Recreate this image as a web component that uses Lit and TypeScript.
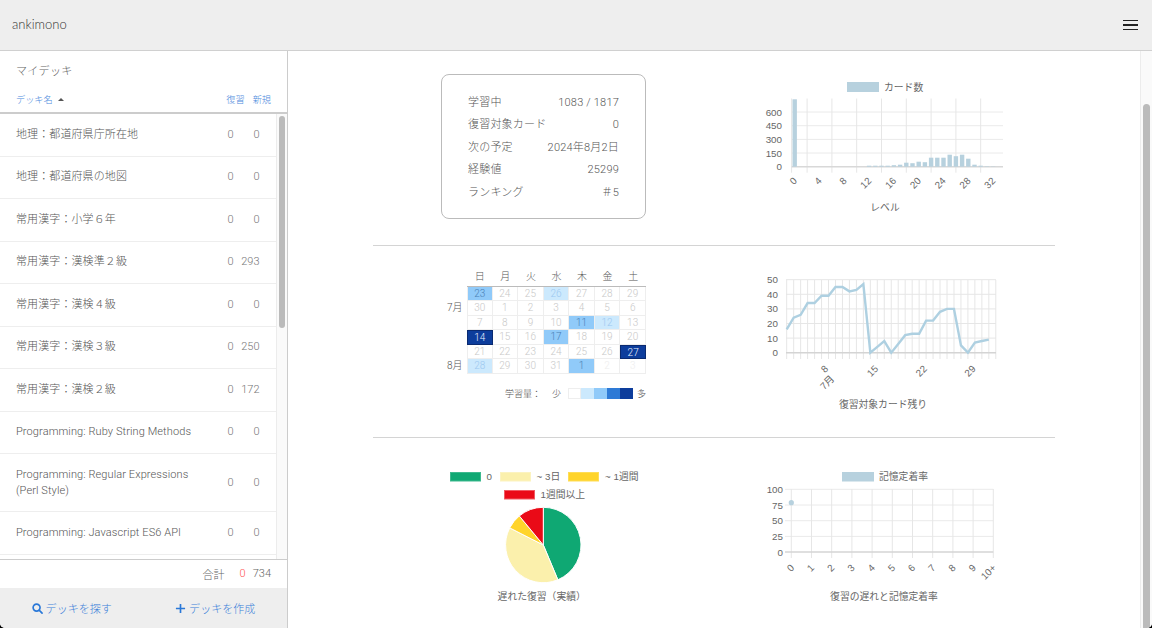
import { LitElement, html, css, svg } from "lit";
import { customElement } from "lit/decorators.js";

const BLUE = "#b7d1de";
const decks: [string, string, string][] = [
  ["地理：都道府県庁所在地", "0", "0"],
  ["地理：都道府県の地図", "0", "0"],
  ["常用漢字：小学６年", "0", "0"],
  ["常用漢字：漢検準２級", "0", "293"],
  ["常用漢字：漢検４級", "0", "0"],
  ["常用漢字：漢検３級", "0", "250"],
  ["常用漢字：漢検２級", "0", "172"],
  ["Programming: Ruby String Methods", "0", "0"],
  ["Programming: Regular Expressions (Perl Style)", "0", "0"],
  ["Programming: Javascript ES6 API", "0", "0"],
  ["", "", ""],
];
const stats = [
  ["学習中", "1083 / 1817"],
  ["復習対象カード", "0"],
  ["次の予定", "2024年8月2日"],
  ["経験値", "25299"],
  ["ランキング", "＃5"],
];
type Cell = [string, string];
const cal: Cell[] = [
  ["23", "l2"], ["24", ""], ["25", ""], ["26", "l1"], ["27", ""], ["28", ""], ["29", ""],
  ["30", ""], ["1", ""], ["2", ""], ["3", ""], ["4", ""], ["5", ""], ["6", ""],
  ["7", ""], ["8", ""], ["9", ""], ["10", ""], ["11", "l2"], ["12", "l1"], ["13", ""],
  ["14", "l4"], ["15", ""], ["16", ""], ["17", "l2"], ["18", ""], ["19", ""], ["20", ""],
  ["21", ""], ["22", ""], ["23", ""], ["24", ""], ["25", ""], ["26", ""], ["27", "l4"],
  ["28", "l1"], ["29", ""], ["30", ""], ["31", ""], ["1", "l2"], ["2", "fu"], ["3", "fu"],
];

const barPx: Record<number, number> = {
  0: 67.4, 12: 1, 13: 1, 14: 1, 15: 1, 16: 1.5, 17: 2, 18: 4, 19: 3.5, 20: 5, 21: 4.5, 22: 9, 23: 9, 24: 9,
  25: 12, 26: 10.5, 27: 12, 28: 8, 29: 2, 30: 1, 31: 0.4, 32: 0.3,
};
const lineData = [16, 24, 26, 34, 34, 39, 39, 45, 45, 42, 43, 47, 0, 4, 8, 0, 6, 12, 13, 13, 22, 22, 28, 30, 30, 5, 0, 7, 8, 9];

function range(n: number) {
  return Array.from({ length: n }, (_, i) => i);
}
function arc(cx: number, cy: number, r: number, a: number, b: number) {
  const p = (d: number) => {
    const t = (d * Math.PI) / 180;
    return `${(cx + r * Math.sin(t)).toFixed(2)} ${(cy - r * Math.cos(t)).toFixed(2)}`;
  };
  return `M${cx} ${cy}L${p(a)}A${r} ${r} 0 ${b - a > 180 ? 1 : 0} 1 ${p(b)}Z`;
}

@customElement("app-root")
export class AppRoot extends LitElement {
  static styles = css`
    :host {
      display: block;
      width: 1152px;
      height: 628px;
      overflow: hidden;
      background: #000;
      color: #555;
      font-family: Roboto, "Noto Sans CJK JP", sans-serif;
      font-size: 11px;
      font-weight: 300;
    }
    .shell {
      display: flex;
      flex-direction: column;
      height: 100%;
      overflow: hidden;
      background: #fff;
      border-radius: 0 0 5px 5px;
    }
    .top {
      flex: none;
      height: 50px;
      box-sizing: content-box;
      border-bottom: 1px solid #d0d0d0;
      background: #eeeeee;
      display: flex;
      align-items: center;
      justify-content: space-between;
      padding: 0 14px 0 12px;
    }
    .logo {
      font-family: Lato, sans-serif;
      font-weight: 300;
      font-size: 13px;
      color: #333;
      margin-top: -3px;
    }
    .burger {
      display: flex;
      flex-direction: column;
      gap: 3px;
      width: 15px;
    }
    .burger i {
      display: block;
      height: 1.5px;
      background: #222;
    }
    .body {
      flex: 1;
      display: flex;
      min-height: 0;
    }
    .side {
      flex: none;
      width: 287px;
      border-right: 1px solid #ccc;
      display: flex;
      flex-direction: column;
      min-height: 0;
    }
    .side-title {
      flex: none;
      padding: 13px 16px 0;
      height: 27px;
      box-sizing: border-box;
      line-height: 15px;
      font-size: 11px;
      color: #666;
      letter-spacing: 0.3px;
    }
    .side-head {
      flex: none;
      height: 36px;
      padding: 14px 16px 0;
      box-sizing: border-box;
      display: flex;
      border-bottom: 2px solid #ccc;
      color: #4a89dc;
      font-size: 9.2px;
      line-height: 15px;
    }
    .side-head .name {
      flex: 1;
    }
    .side-head .sort {
      display: inline-block;
      margin-left: 5px;
      vertical-align: 2px;
      border: 3px solid transparent;
      border-top: 0;
      border-bottom: 3.5px solid #555;
    }
    .side-head .h2 {
      margin-left: 8px;
    }
    .list-wrap {
      flex: 1;
      min-height: 0;
      display: flex;
      overflow: hidden;
    }
    .list {
      flex: 1;
      min-width: 0;
    }
    .row {
      display: flex;
      align-items: center;
      min-height: 42.5px;
      box-sizing: border-box;
      border-bottom: 1.5px solid #eee;
      padding: 12.5px 16px;
      line-height: 16px;
    }
    .row .t {
      flex: 1;
      min-width: 0;
      padding-right: 28px;
      letter-spacing: 0.1px;
    }
    .row .a {
      width: 12px;
      text-align: center;
      color: #777;
    }
    .row .b {
      width: 23px;
      text-align: right;
      color: #777;
    }
    .track {
      flex: none;
      width: 11.5px;
      box-sizing: border-box;
      background: #fafafa;
      border-left: 1px solid #ececec;
    }
    .thumb {
      width: 6.5px;
      margin: 2px 0 0 2px;
      height: 212px;
      background: #bbb;
      border-radius: 3px;
    }
    .total {
      flex: none;
      height: 29px;
      box-sizing: border-box;
      border-top: 1px solid #ccc;
      padding: 0 16px 1px 0;
      display: flex;
      justify-content: flex-end;
      align-items: center;
      color: #666;
    }
    .total .z {
      color: #f55;
      margin-left: 15px;
      margin-right: 7px;
    }
    .actions {
      flex: none;
      height: 40px;
      background: #eee;
      display: flex;
      color: #3b7fd9;
      font-size: 11px;
      letter-spacing: 0.05px;
    }
    .actions div {
      flex: 1;
      display: flex;
      align-items: center;
      justify-content: center;
      gap: 3px;
    }
    .actions svg {
      width: 11px;
      height: 11px;
    }
    .main {
      flex: 1;
      min-width: 0;
      display: flex;
    }
    .content {
      flex: 1;
      min-width: 0;
      padding: 0 85px;
    }
    .mtrack {
      flex: none;
      width: 12px;
      box-sizing: border-box;
      background: #fafafa;
      border-left: 1px solid #ececec;
    }
    .mthumb {
      width: 7px;
      margin: 53px 0 0 2px;
      height: 530px;
      background: #bbb;
      border-radius: 3.5px;
    }
    .sec {
      display: grid;
      grid-template-columns: 341px 341px;
      box-sizing: border-box;
      border-bottom: 1px solid #d4d4d4;
    }
    .s1 {
      height: 195px;
    }
    .s2 {
      height: 192px;
    }
    .s3 {
      border-bottom: 0;
    }
    .card {
      width: 205px;
      height: 145px;
      box-sizing: border-box;
      margin: 23px 0 0 68px;
      border: 1px solid #bbb;
      border-radius: 8px;
      padding: 17px 26px 0;
    }
    .card div {
      display: flex;
      justify-content: space-between;
      height: 22.4px;
      line-height: 22.4px;
      letter-spacing: 0.2px;
    }
    .cal {
      margin: 24px 0 0 74px;
      width: 199px;
    }
    .calgrid {
      display: grid;
      grid-template-columns: 20px repeat(7, 25.57px);
    }
    .dow {
      text-align: center;
      height: 15.5px;
      line-height: 14px;
      font-size: 10px;
      color: #555;
      border-bottom: 1px solid #bbb;
    }
    .mon {
      font-size: 10px;
      line-height: 14.5px;
      color: #555;
      white-space: nowrap;
    }
    .day {
      height: 14.5px;
      box-sizing: border-box;
      line-height: 14px;
      text-align: center;
      font-size: 10px;
      color: #c8c8c8;
      border-right: 1px solid #eee;
      border-bottom: 1px solid #eee;
    }
    .first {
      border-left: 1px solid #eee;
    }
    .l1 {
      background: #cce9fd;
      color: #9cc8f0;
    }
    .l2 {
      background: #90caf9;
      color: #4a7fb5;
    }
    .l4 {
      background: #0d3d9c;
      color: #e8f0ff;
      border: 1px solid #0a2a70;
    }
    .fu {
      color: #eeeeee;
    }
    .callegend {
      display: flex;
      align-items: center;
      justify-content: flex-end;
      margin-top: 14px;
      font-size: 9px;
      color: #555;
      height: 11px;
    }
    .callegend .lab {
      margin-right: 11px;
    }
    .sw {
      display: flex;
      margin: 0 4px 0 7px;
    }
    .sw i {
      display: block;
      width: 13px;
      height: 11px;
    }
    .sw .w {
      box-sizing: border-box;
      border: 1px solid #eee;
      background: #fff;
    }
    .c1 { background: #cce9fd; }
    .c2 { background: #90caf9; }
    .c3 { background: #2e7ad6; }
    .c4 { background: #0d3d9c; }
    svg.chart {
      display: block;
      overflow: visible;
    }
    .chart text {
      font-family: "Liberation Sans", "Noto Sans CJK JP", sans-serif;
      font-size: 9.8px;
      font-weight: 400;
      fill: #666;
    }
    .right {
      margin: 19px 0 0 36px;
    }
    .right3 {
      margin: 22px 0 0 36px;
    }
    .pie {
      margin: 22px 0 0 67px;
    }
  `;

  private yLabel(t: string | number, y: number, x: number) {
    return svg`<text x=${x} y=${y} text-anchor="end" dominant-baseline="central">${t}</text>`;
  }
  private tick(t: string | number, x: number, y: number) {
    return svg`<text x=${x} y=${y} text-anchor="end" dominant-baseline="central" transform="rotate(-45 ${x} ${y})">${t}</text>`;
  }

  private bars() {
    const L = 791.7, R = 1003, T = 98.5, B = 166.7;
    const ys = [112, 125.7, 139.4, 153];
    const xs = [0, 4, 8, 12, 16, 20, 24, 28, 32];
    return html`<svg class="chart right" width="270" height="150" viewBox="750 70 270 150">
      <rect x="847" y="82" width="32" height="10" fill=${BLUE}></rect>
      <text x="884" y="87" dominant-baseline="central">カード数</text>
      ${ys.map((y) => svg`<line x1=${L} x2=${R} y1=${y} y2=${y} stroke="#eaeaea"></line>`)}
      ${[-0.5, 2, 6, 10, 14, 18, 22, 26, 30].map((i) => {
        const x = 794.7 + 6.2 * i;
        return svg`<line x1=${x} x2=${x} y1=${T} y2=${B + 6} stroke="#e6e6e6"></line>`;
      })}
      <line x1=${L} x2=${R} y1=${B} y2=${B} stroke="#d8d8d8" stroke-width="1.5"></line>
      ${Object.entries(barPx).map(([k, h]) => {
        const x = 794.7 + 6.2 * Number(k);
        return svg`<rect x=${x - 2.2} y=${B - h} width="4.4" height=${h} fill=${BLUE}></rect>`;
      })}
      ${[600, 450, 300, 150, 0].map((v, i) => this.yLabel(v, i < 4 ? ys[i] : B, 782))}
      ${xs.map((v) => this.tick(v, 794.7 + 6.2 * v + 0.5, 179))}
      <text x="885" y="207" text-anchor="middle" dominant-baseline="central">レベル</text>
    </svg>`;
  }

  private line() {
    const x = (i: number) => 786.7 + 6.97 * i;
    const y = (v: number) => 352.7 - v * 1.46;
    return html`<svg class="chart right" width="270" height="150" viewBox="750 265 270 150">
      ${[50, 40, 30, 20, 10].map((v) => svg`<line x1="786" x2="996" y1=${y(v)} y2=${y(v)} stroke="#e6e6e6"></line>`)}
      ${range(31).map((i) => svg`<line x1=${x(i)} x2=${x(i)} y1="280" y2="359" stroke="#e6e6e6"></line>`)}
      <line x1="786" x2="996" y1="352.7" y2="352.7" stroke="#d4d4d4" stroke-width="1.5"></line>
      <polyline fill="none" stroke="#aed0e1" stroke-width="2.4" points=${lineData.map((v, i) => `${x(i).toFixed(2)},${y(v).toFixed(2)}`).join(" ")}></polyline>
      ${[50, 40, 30, 20, 10, 0].map((v) => this.yLabel(v, y(v), 778))}
      ${this.tick(8, x(7) - 9, 367)}
      ${this.tick("7月", x(7) - 3, 377)}
      ${this.tick(15, x(14) - 8, 367)}
      ${this.tick(22, x(21) - 8, 367)}
      ${this.tick(29, x(28) - 8, 367)}
      <text x="883" y="404" text-anchor="middle" dominant-baseline="central">復習対象カード残り</text>
    </svg>`;
  }

  private pie() {
    const cx = 543.3, cy = 545, r = 37.7;
    const seg: [number, number, string][] = [
      [0, 157.3, "#0fa873"],
      [157.3, 297, "#fbf0ac"],
      [297, 320.5, "#ffd42a"],
      [320.5, 360, "#ea0a17"],
    ];
    const leg = (x: number, y: number, c: string, s: string, tx: string | number, t: string) => svg`
      <rect x=${x + 0.5} y=${y + 0.5} width="30" height="8.5" fill=${c} stroke=${s}></rect>
      <text x=${tx} y=${y + 4.5} dominant-baseline="central">${t}</text>`;
    return html`<svg class="chart pie" width="210" height="150" viewBox="440 460 210 150">
      ${leg(450, 472, "#0fa873", "#3db98e", 486.5, "0")}
      ${leg(500, 472, "#fbf0ac", "#fcf3c0", 536.5, "~ 3日")}
      ${leg(568, 472, "#ffd42a", "#ffdd55", 605, "~ 1週間")}
      ${leg(504, 490, "#ea0a17", "#f05a63", 540.5, "1週間以上")}
      ${seg.map(([a, b, c]) => svg`<path d=${arc(cx, cy, r, a, b)} fill=${c} stroke="#fff" stroke-width="1"></path>`)}
      <text x="541.7" y="596" text-anchor="middle" dominant-baseline="central">遅れた復習（実績）</text>
    </svg>`;
  }

  private rate() {
    const x = (i: number) => 791.3 + 20.2 * i;
    const ys = [489.3, 505, 520.7, 536.4, 552];
    const labels = ["0", "1", "2", "3", "4", "5", "6", "7", "8", "9", "10+"];
    return html`<svg class="chart right3" width="270" height="150" viewBox="750 460 270 150">
      <rect x="842" y="472" width="32" height="9.5" fill=${BLUE}></rect>
      <text x="879" y="476" dominant-baseline="central">記憶定着率</text>
      ${ys.slice(0, 4).map((y) => svg`<line x1="785" x2="993.3" y1=${y} y2=${y} stroke="#eaeaea"></line>`)}
      ${labels.map((_, i) => svg`<line x1=${x(i)} x2=${x(i)} y1="489" y2="558" stroke="#e6e6e6"></line>`)}
      <line x1="785" x2="993.3" y1="552" y2="552" stroke="#d4d4d4" stroke-width="1.5"></line>
      <circle cx="791.3" cy="502.7" r="2.6" fill=${BLUE}></circle>
      ${[100, 75, 50, 25, 0].map((v, i) => this.yLabel(v, ys[i], 783))}
      ${labels.map((v, i) => this.tick(v, x(i) + 1, 566))}
      <text x="884" y="596.5" text-anchor="middle" dominant-baseline="central">復習の遅れと記憶定着率</text>
    </svg>`;
  }

  private calendar() {
    const months: Record<number, string> = { 1: "7月", 5: "8月" };
    return html`<div class="cal">
      <div class="calgrid">
        <span></span>
        ${["日", "月", "火", "水", "木", "金", "土"].map((d) => html`<span class="dow">${d}</span>`)}
        ${range(6).map(
          (r) => html`<span class="mon">${months[r] ?? ""}</span>
            ${cal.slice(r * 7, r * 7 + 7).map(
              ([t, c], i) => html`<span class="day ${c} ${i === 0 ? "first" : ""}">${t}</span>`
            )}`
        )}
      </div>
      <div class="callegend">
        <span class="lab">学習量：</span><span>少</span>
        <span class="sw"><i class="w"></i><i class="c1"></i><i class="c2"></i><i class="c3"></i><i class="c4"></i></span>
        <span>多</span>
      </div>
    </div>`;
  }

  render() {
    return html`
      <div class="shell">
        <div class="top">
          <span class="logo">ankimono</span>
          <span class="burger"><i></i><i></i><i></i></span>
        </div>
        <div class="body">
          <aside class="side">
            <div class="side-title">マイデッキ</div>
            <div class="side-head">
              <span class="name">デッキ名<i class="sort"></i></span>
              <span>復習</span><span class="h2">新規</span>
            </div>
            <div class="list-wrap">
              <div class="list">
                ${decks.map(
                  ([t, a, b]) => html`<div class="row">
                    <span class="t">${t}</span><span class="a">${a}</span><span class="b">${b}</span>
                  </div>`
                )}
              </div>
              <div class="track"><div class="thumb"></div></div>
            </div>
            <div class="total"><span>合計</span><span class="z">0</span><span>734</span></div>
            <div class="actions">
              <div>
                <svg viewBox="0 0 12 12" fill="none" stroke="#2a78d8" stroke-width="1.8" stroke-linecap="round">
                  <circle cx="5" cy="5" r="3.8"></circle><path d="M8 8l3 3"></path>
                </svg>
                <span>デッキを探す</span>
              </div>
              <div>
                <svg viewBox="0 0 12 12" fill="none" stroke="#2a78d8" stroke-width="1.8">
                  <path d="M6 1v10M1 6h10"></path>
                </svg>
                <span>デッキを作成</span>
              </div>
            </div>
          </aside>
          <main class="main">
            <div class="content">
              <section class="sec s1">
                <div class="card">
                  ${stats.map(([k, v]) => html`<div><span>${k}</span><span>${v}</span></div>`)}
                </div>
                ${this.bars()}
              </section>
              <section class="sec s2">
                ${this.calendar()}
                ${this.line()}
              </section>
              <section class="sec s3">
                ${this.pie()}
                ${this.rate()}
              </section>
            </div>
            <div class="mtrack"><div class="mthumb"></div></div>
          </main>
        </div>
      </div>
    `;
  }
}
